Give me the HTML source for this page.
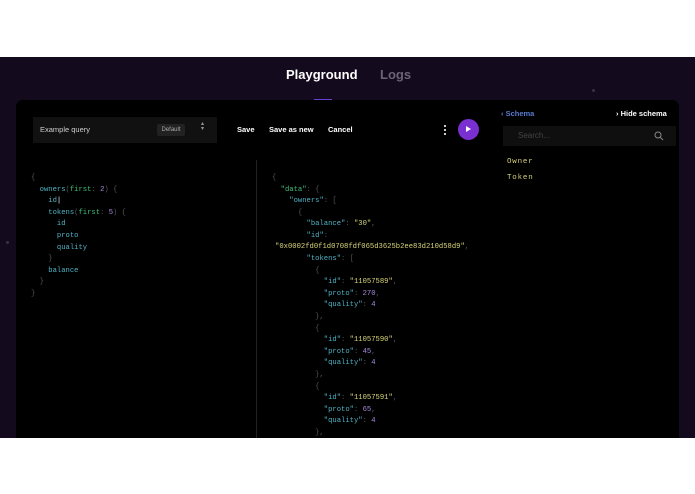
<!DOCTYPE html>
<html><head><meta charset="utf-8"><style>
*{margin:0;padding:0;box-sizing:border-box}
body{width:695px;height:494px;background:#fff;font-family:"Liberation Sans",sans-serif;position:relative;overflow:hidden}
.bg{position:absolute;left:0;top:57px;width:695px;height:381px;background:#130a1d}
.tab{position:absolute;top:67px;font-size:13px;font-weight:bold}
.panel{position:absolute;left:16px;top:100px;width:663px;height:338px;background:#000;border-radius:7px 7px 0 0}
.a{position:absolute}
.code{position:absolute;font-family:"Liberation Mono",monospace;font-size:7.2px;line-height:11.6px;white-space:pre;color:#555}
.k{color:#4fb3c4}.g{color:#3fbf78}.n{color:#a78ae0}.s{color:#d8d47a}.p{color:#555}
.btn{position:absolute;top:125px;color:#fff;font-size:7.5px;font-weight:bold}
</style></head><body>
<div class="bg"></div>
<div class="a" style="left:592px;top:89px;width:3px;height:3px;border-radius:50%;background:#3a2f48"></div>
<div class="a" style="left:6px;top:241px;width:3px;height:3px;border-radius:50%;background:#3a2f48"></div>
<div class="tab" style="left:286px;color:#fff">Playground</div>
<div class="tab" style="left:380px;color:#6b6478">Logs</div>
<div class="a" style="left:314px;top:99px;width:18px;height:2px;background:#6b3fd0"></div>
<div class="panel"></div>
<div class="a" style="left:33px;top:117px;width:184px;height:26px;background:#111"></div>
<div class="a" style="left:40px;top:125px;color:#cfcfcf;font-size:7.5px">Example query</div>
<div class="a" style="left:157px;top:124px;width:28px;height:12px;background:#222;border-radius:2px;color:#aaa;font-size:6px;line-height:12px;text-align:center">Default</div>
<div class="a" style="left:201px;top:122px;color:#999;font-size:6px;line-height:5px">▴<br>▾</div>
<div class="btn" style="left:237px">Save</div>
<div class="btn" style="left:269px">Save as new</div>
<div class="btn" style="left:328px">Cancel</div>
<div class="a" style="left:444px;top:125px;width:2px;height:10px;border-left:2px dotted #ccc"></div>
<div class="a" style="left:458px;top:119px;width:21px;height:21px;border-radius:50%;background:#7a2fd0"></div>
<div class="a" style="left:466px;top:126px;width:0;height:0;border-left:5px solid #fff;border-top:3.5px solid transparent;border-bottom:3.5px solid transparent"></div>
<div class="a" style="left:501px;top:109px;color:#5a7ad0;font-size:7.5px;font-weight:bold">‹ Schema</div>
<div class="a" style="left:616px;top:109px;color:#fff;font-size:7.5px;font-weight:bold">› Hide schema</div>
<div class="a" style="left:503px;top:126px;width:173px;height:20px;background:#0f0f0f"></div>
<div class="a" style="left:518px;top:131px;color:#444;font-size:8px">Search...</div>
<svg class="a" style="left:654px;top:131px" width="10" height="10"><circle cx="4" cy="4" r="3" fill="none" stroke="#888" stroke-width="1"/><line x1="6.2" y1="6.2" x2="9" y2="9" stroke="#888"/></svg>
<div class="code s" style="left:507px;top:154px;font-size:7.5px;line-height:16px;letter-spacing:.8px">Owner
Token</div>
<div class="a" style="left:256px;top:160px;width:1px;height:278px;background:#222"></div>
<div class="code" style="left:31px;top:173px">{
  <span class="k">owners</span>(<span class="g">first</span>: <span class="n">2</span>) {
    <span class="k">id</span><span style="color:#fff">|</span>
    <span class="k">tokens</span>(<span class="g">first</span>: <span class="n">5</span>) {
      <span class="k">id</span>
      <span class="k">proto</span>
      <span class="k">quality</span>
    }
    <span class="k">balance</span>
  }
}</div>
<div class="code" style="left:272px;top:173px">{
  <span class="g">"data"</span>: {
    <span class="k">"owners"</span>: [
      {
        <span class="k">"balance"</span>: <span class="s">"30"</span>,
        <span class="k">"id"</span>:
</div>
<div class="code" style="left:275px;top:242px"><span class="s">"0x0002fd0f1d0708fdf065d3625b2ee83d210d58d9"</span>,</div>
<div class="code" style="left:272px;top:254px">        <span class="k">"tokens"</span>: [
          {
            <span class="k">"id"</span>: <span class="s">"11057589"</span>,
            <span class="k">"proto"</span>: <span class="n">270</span>,
            <span class="k">"quality"</span>: <span class="n">4</span>
          },
          {
            <span class="k">"id"</span>: <span class="s">"11057590"</span>,
            <span class="k">"proto"</span>: <span class="n">45</span>,
            <span class="k">"quality"</span>: <span class="n">4</span>
          },
          {
            <span class="k">"id"</span>: <span class="s">"11057591"</span>,
            <span class="k">"proto"</span>: <span class="n">65</span>,
            <span class="k">"quality"</span>: <span class="n">4</span>
          },</div>
<div class="a" style="left:0;top:438px;width:695px;height:56px;background:#fff"></div>
</body></html>
